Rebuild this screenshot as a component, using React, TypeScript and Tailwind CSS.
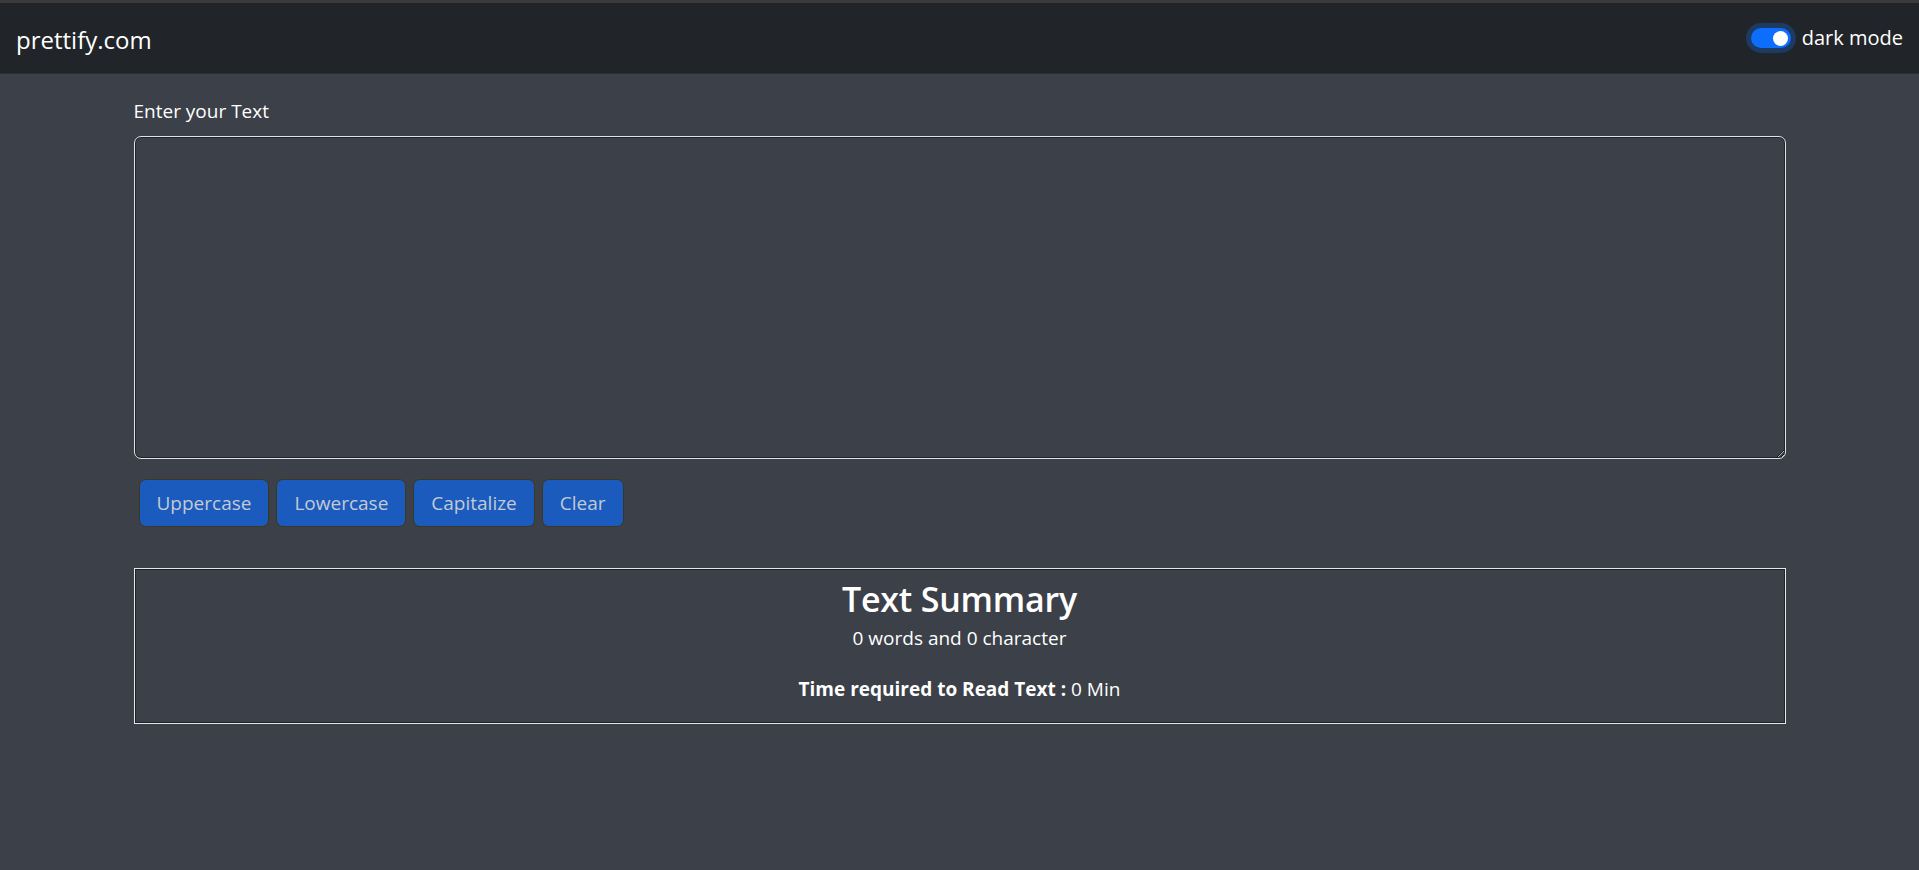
import React, { useState } from "react";

export default function App() {
  const [text, setText] = useState("");
  const words = text.split(/\s+/).filter((w) => w.length > 0).length;
  const chars = text.length;
  const font = { fontFamily: '"Open Sans", "Noto Sans", sans-serif' };
  return (
    <div className="min-h-[870px] bg-[#3c4048] text-white" style={font}>
      <div className="h-[3px] bg-[#3a3a3a]" />
      <nav className="h-[71px] bg-[#212529] border-b border-[#2c3036] flex items-center justify-between pl-4 pr-4">
        <span className="text-[24px] text-white leading-none mt-[4px]">prettify.com</span>
        <div className="flex items-center gap-[6px]">
          <div className="w-[50px] h-[30px] rounded-full bg-[#1c3a62] flex items-center justify-center">
            <div className="w-[40px] h-[20px] rounded-full bg-[#0d6efd] flex items-center justify-end pr-[3px]">
              <div className="w-[15px] h-[15px] rounded-full bg-white" />
            </div>
          </div>
          <span className="text-[20px] text-white">dark mode</span>
        </div>
      </nav>
      <div className="w-[1652px] mx-auto pt-[22px]">
        <label className="block text-[19px] leading-[30px] mb-[10px] text-white">Enter your Text</label>
        <textarea
          value={text}
          onChange={(e) => setText(e.target.value)}
          className="block w-full h-[323px] bg-[#3c4048] border border-[#dfe2e6] rounded-[7px] shadow-[inset_0_0_0_1px_#1f2329] outline-none text-white text-[20px] px-[15px] py-[8px]"
        />
        <div className="flex mt-[20px] px-[5px] gap-[7px]">
          {["Uppercase", "Lowercase", "Capitalize", "Clear"].map((b) => (
            <button
              key={b}
              className="h-[48px] px-[17px] bg-[#1b5bbd] border border-[#3a3822] rounded-[7px] text-[#c3cad4] text-[19px]"
            >
              {b}
            </button>
          ))}
        </div>
        <div className="mt-[41px] h-[156px] border border-[#e4e7ea] shadow-[inset_0_0_0_1px_#1f2329] flex flex-col items-center">
          <h2 className="text-[34px] leading-[48px] font-semibold mt-[6px] tracking-[-0.2px]">Text Summary</h2>
          <p className="text-[19px] leading-[30px]">
            {words} words and {chars} character
          </p>
          <p className="text-[19px] leading-[30px] mt-[21px]">
            <b className="font-bold">Time required to Read Text :</b> {(0.008 * words).toString()} Min
          </p>
        </div>
      </div>
    </div>
  );
}
